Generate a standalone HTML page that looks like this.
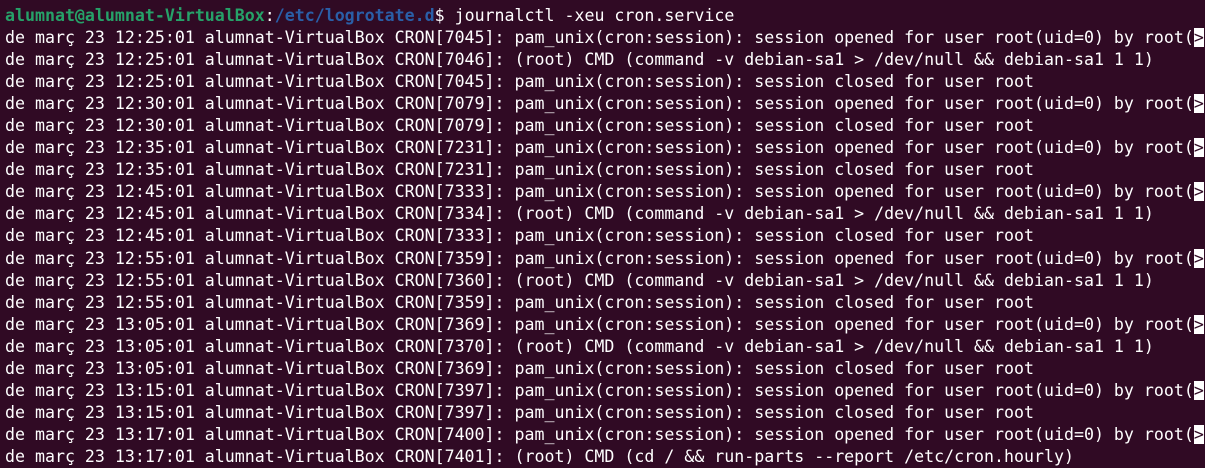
<!DOCTYPE html>
<html><head><meta charset="utf-8"><style>
html,body{margin:0;padding:0;background:#300a24;width:1205px;height:468px;overflow:hidden}
pre{margin:0;padding:5px 0 0 5px;font-family:"DejaVu Sans Mono","Liberation Mono",monospace;font-size:16.6px;line-height:22.05px;color:#ffffff;white-space:pre;letter-spacing:0}
.g{color:#26a269;font-weight:bold}.b{color:#2a5fa8;font-weight:bold}
.r{background:#fff;color:#300a24}
</style></head><body><pre><span class="g">alumnat@alumnat-VirtualBox</span>:<span class="b">/etc/logrotate.d</span>$ journalctl -xeu cron.service
de març 23 12:25:01 alumnat-VirtualBox CRON[7045]: pam_unix(cron:session): session opened for user root(uid=0) by root(<span class="r">&gt;</span>
de març 23 12:25:01 alumnat-VirtualBox CRON[7046]: (root) CMD (command -v debian-sa1 &gt; /dev/null &amp;&amp; debian-sa1 1 1)
de març 23 12:25:01 alumnat-VirtualBox CRON[7045]: pam_unix(cron:session): session closed for user root
de març 23 12:30:01 alumnat-VirtualBox CRON[7079]: pam_unix(cron:session): session opened for user root(uid=0) by root(<span class="r">&gt;</span>
de març 23 12:30:01 alumnat-VirtualBox CRON[7079]: pam_unix(cron:session): session closed for user root
de març 23 12:35:01 alumnat-VirtualBox CRON[7231]: pam_unix(cron:session): session opened for user root(uid=0) by root(<span class="r">&gt;</span>
de març 23 12:35:01 alumnat-VirtualBox CRON[7231]: pam_unix(cron:session): session closed for user root
de març 23 12:45:01 alumnat-VirtualBox CRON[7333]: pam_unix(cron:session): session opened for user root(uid=0) by root(<span class="r">&gt;</span>
de març 23 12:45:01 alumnat-VirtualBox CRON[7334]: (root) CMD (command -v debian-sa1 &gt; /dev/null &amp;&amp; debian-sa1 1 1)
de març 23 12:45:01 alumnat-VirtualBox CRON[7333]: pam_unix(cron:session): session closed for user root
de març 23 12:55:01 alumnat-VirtualBox CRON[7359]: pam_unix(cron:session): session opened for user root(uid=0) by root(<span class="r">&gt;</span>
de març 23 12:55:01 alumnat-VirtualBox CRON[7360]: (root) CMD (command -v debian-sa1 &gt; /dev/null &amp;&amp; debian-sa1 1 1)
de març 23 12:55:01 alumnat-VirtualBox CRON[7359]: pam_unix(cron:session): session closed for user root
de març 23 13:05:01 alumnat-VirtualBox CRON[7369]: pam_unix(cron:session): session opened for user root(uid=0) by root(<span class="r">&gt;</span>
de març 23 13:05:01 alumnat-VirtualBox CRON[7370]: (root) CMD (command -v debian-sa1 &gt; /dev/null &amp;&amp; debian-sa1 1 1)
de març 23 13:05:01 alumnat-VirtualBox CRON[7369]: pam_unix(cron:session): session closed for user root
de març 23 13:15:01 alumnat-VirtualBox CRON[7397]: pam_unix(cron:session): session opened for user root(uid=0) by root(<span class="r">&gt;</span>
de març 23 13:15:01 alumnat-VirtualBox CRON[7397]: pam_unix(cron:session): session closed for user root
de març 23 13:17:01 alumnat-VirtualBox CRON[7400]: pam_unix(cron:session): session opened for user root(uid=0) by root(<span class="r">&gt;</span>
de març 23 13:17:01 alumnat-VirtualBox CRON[7401]: (root) CMD (cd / &amp;&amp; run-parts --report /etc/cron.hourly)</pre></body></html>
